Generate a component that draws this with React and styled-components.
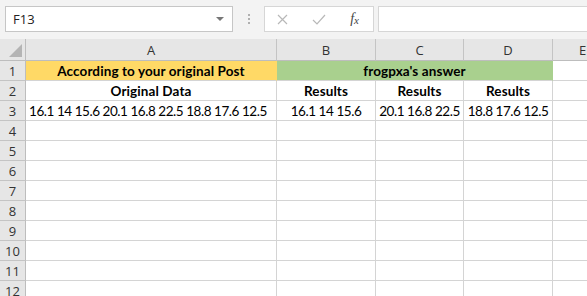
import styled, { createGlobalStyle } from "styled-components";

const GlobalStyle = createGlobalStyle`
  html, body {
    margin: 0;
    padding: 0;
    background: #ffffff;
    overflow: hidden;
  }
  * { box-sizing: border-box; }
`;

const COLS = [
  { key: "A", width: 251 },
  { key: "B", width: 99 },
  { key: "C", width: 88 },
  { key: "D", width: 89 },
  { key: "E", width: 60 },
];

const template = `26px ${COLS.map((c) => c.width + "px").join(" ")}`;

const rows = [
  [
    { text: "According to your original Post", bold: true, fill: "#ffd966", align: "center" },
    { text: "frogpxa's answer", bold: true, fill: "#a9d08e", align: "center", span: 3 },
    { text: "" },
  ],
  [
    { text: "Original Data", bold: true, align: "center" },
    { text: "Results", bold: true, align: "center" },
    { text: "Results", bold: true, align: "center" },
    { text: "Results", bold: true, align: "center" },
    { text: "" },
  ],
  [
    { text: "16.1 14 15.6 20.1 16.8 22.5 18.8 17.6 12.5", align: "left" },
    { text: "16.1 14 15.6", align: "center" },
    { text: "20.1 16.8 22.5", align: "center" },
    { text: "18.8 17.6 12.5", align: "center" },
    { text: "" },
  ],
];

const emptyRow = [{}, {}, {}, {}, {}];
for (let i = 4; i <= 12; i++) rows.push(emptyRow);

export default function App() {
  return (
    <Screen>
      <GlobalStyle />
      <FormulaBar>
        <NameBox>
          <span>F13</span>
          <Caret />
        </NameBox>
        <Grip>
          <i />
          <i />
          <i />
        </Grip>
        <ActionBox>
          <Action>
            <svg width="11" height="11" viewBox="0 0 11 11">
              <path d="M1 1 L10 10 M10 1 L1 10" stroke="#b8b8b8" strokeWidth="1.2" fill="none" />
            </svg>
          </Action>
          <Action>
            <svg width="14" height="11" viewBox="0 0 14 11">
              <path d="M1 6 L5 10 L13 1" stroke="#b8b8b8" strokeWidth="1.2" fill="none" />
            </svg>
          </Action>
          <Fx>
            f<sub>x</sub>
          </Fx>
        </ActionBox>
        <FormulaInput />
      </FormulaBar>

      <Sheet>
        <Corner>
          <Triangle />
        </Corner>
        {COLS.map((c) => (
          <ColHead key={c.key}>{c.key}</ColHead>
        ))}
        {rows.map((cells, r) => [
          <RowHead key={"h" + r}>{r + 1}</RowHead>,
          ...cells.map((cell, i) => (
            <Cell
              key={r + "-" + i}
              $fill={cell.fill}
              $bold={cell.bold}
              $align={cell.align}
              $span={cell.span}
            >
              {cell.text}
            </Cell>
          )),
        ])}
      </Sheet>
    </Screen>
  );
}

const Screen = styled.div`
  width: 587px;
  height: 296px;
  background: #f3f3f3;
  overflow: hidden;
`;

const FormulaBar = styled.div`
  display: flex;
  align-items: flex-start;
  height: 39px;
  padding: 6px 0 0 5px;
  background: #f3f3f3;
`;

const NameBox = styled.div`
  width: 228px;
  height: 26px;
  background: #fff;
  border: 1px solid #c6c6c6;
  display: flex;
  align-items: center;
  justify-content: space-between;
  padding: 0 8px 0 7px;
  font-family: "Segoe UI", "Open Sans", "DejaVu Sans", sans-serif;
  font-size: 13px;
  color: #222;
`;

const Caret = styled.span`
  width: 0;
  height: 0;
  border-left: 4px solid transparent;
  border-right: 4px solid transparent;
  border-top: 4px solid #777;
`;

const Grip = styled.div`
  width: 31px;
  height: 26px;
  display: flex;
  flex-direction: column;
  align-items: center;
  justify-content: center;
  gap: 2px;
  i {
    display: block;
    width: 2px;
    height: 2px;
    background: #b0b0b0;
  }
`;

const ActionBox = styled.div`
  width: 110px;
  height: 26px;
  background: #fff;
  border: 1px solid #d6d6d6;
  display: flex;
  align-items: center;
  justify-content: space-between;
  padding: 0 14px 0 12px;
`;

const Action = styled.div`
  display: flex;
  align-items: center;
  justify-content: center;
`;

const Fx = styled.div`
  font-family: "Liberation Serif", "DejaVu Serif", serif;
  font-style: italic;
  font-size: 14px;
  color: #444;
  sub {
    font-size: 11px;
    vertical-align: -1px;
  }
`;

const FormulaInput = styled.div`
  flex: 1;
  height: 26px;
  margin-left: 4px;
  background: #fff;
  border: 1px solid #d6d6d6;
  border-right: none;
`;

const Sheet = styled.div`
  display: grid;
  grid-template-columns: ${template};
  grid-template-rows: 22px;
  grid-auto-rows: 20px;
  background: #fff;
`;

const Corner = styled.div`
  position: relative;
  background: #e6e6e6;
  border-right: 1px solid #bdbdbd;
  border-bottom: 1px solid #bdbdbd;
`;

const Triangle = styled.div`
  position: absolute;
  right: 3px;
  bottom: 3px;
  width: 0;
  height: 0;
  border-left: 13px solid transparent;
  border-bottom: 13px solid #b4b4b4;
`;

const ColHead = styled.div`
  background: #e6e6e6;
  border-right: 1px solid #c4c4c4;
  border-bottom: 1px solid #bdbdbd;
  display: flex;
  align-items: center;
  justify-content: center;
  font-family: "Segoe UI", "Open Sans", "DejaVu Sans", sans-serif;
  font-size: 13px;
  color: #333;
`;

const RowHead = styled.div`
  background: #e6e6e6;
  border-right: 1px solid #bdbdbd;
  border-bottom: 1px solid #c4c4c4;
  display: flex;
  align-items: center;
  justify-content: center;
  font-family: "Segoe UI", "Open Sans", "DejaVu Sans", sans-serif;
  font-size: 13px;
  color: #333;
`;

const Cell = styled.div`
  grid-column: span ${(p) => p.$span || 1};
  background: ${(p) => p.$fill || "#fff"};
  border-right: 1px solid ${(p) => (p.$fill ? p.$fill : "#d4d4d4")};
  border-bottom: 1px solid #d4d4d4;
  display: flex;
  align-items: center;
  justify-content: ${(p) => (p.$align === "left" ? "flex-start" : "center")};
  padding: 0 3px;
  white-space: nowrap;
  overflow: visible;
  font-family: Lato, "Open Sans", sans-serif;
  font-size: 13.5px;
  letter-spacing: ${(p) => (p.$bold ? "0.1px" : "-0.45px")};
  font-weight: ${(p) => (p.$bold ? 700 : 400)};
  color: #000;
`;
